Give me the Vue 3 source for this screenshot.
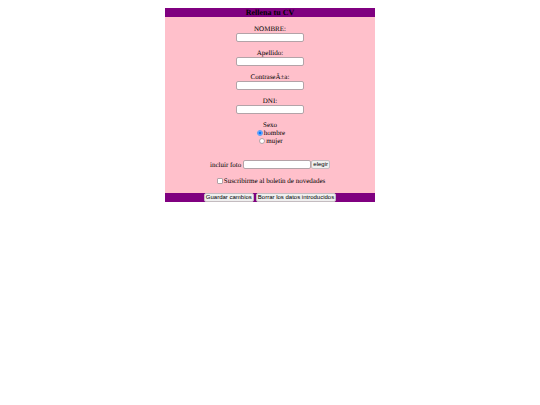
<template>
  <form class="cv" @submit.prevent>
    <header class="bar">
      <h1>Rellena tu CV</h1>
    </header>

    <div class="body">
      <!-- datos personales -->
      <div v-for="campo in campos" :key="campo.id" class="field">
        <label :for="campo.id">{{ campo.label }}</label>
        <input :id="campo.id" v-model="datos[campo.id]" class="text" :type="campo.type" />
      </div>

      <div class="sexo" role="radiogroup" aria-labelledby="sexo">
        <span id="sexo">Sexo</span>
        <label><input v-model="sexo" type="radio" name="sexo" value="hombre" />hombre</label>
        <label><input v-model="sexo" type="radio" name="sexo" value="mujer" />mujer</label>
      </div>

      <div class="foto">
        <label for="foto">incluir foto</label>
        <input id="foto" v-model="foto" class="text" type="text" />
        <button type="button">elegir</button>
      </div>

      <label class="boletin">
        <input v-model="boletin" type="checkbox" />Suscribirme al boletin de novedades
      </label>
    </div>

    <footer class="bar">
      <button type="submit">Guardar cambios</button>
      <button type="button" @click="borrar">Borrar los datos introducidos</button>
    </footer>
  </form>
</template>

<script setup>
import { reactive, ref } from 'vue';

const campos = [
  { id: 'nombre', label: 'NOMBRE:', type: 'text' },
  { id: 'apellido', label: 'Apellido:', type: 'text' },
  { id: 'clave', label: 'ContraseÃ±a:', type: 'password' },
  { id: 'dni', label: 'DNI:', type: 'text' }
];

const datos = reactive({ nombre: '', apellido: '', clave: '', dni: '' });
const sexo = ref('hombre');
const foto = ref('');
const boletin = ref(false);

function borrar() {
  campos.forEach((campo) => { datos[campo.id] = ''; });
  sexo.value = 'hombre';
  foto.value = '';
  boletin.value = false;
}
</script>

<style>
body {
  background: #fff;
}
</style>

<style scoped>
.cv {
  width: 39%;
  margin: 0 auto;
  padding-top: 8px;
  font-family: "Liberation Serif", "Times New Roman", serif;
  font-size: 7px;
  line-height: 8px;
  text-rendering: geometricPrecision;
  color: #000;
}
.bar {
  display: flex;
  justify-content: center;
  gap: 2px;
  background: purple;
}
h1 {
  margin: 0;
  font-size: 8px;
  line-height: 9px;
}
.body {
  display: flex;
  flex-direction: column;
  align-items: center;
  padding: 8px 0;
  background: pink;
}
.field {
  display: flex;
  flex-direction: column;
  align-items: center;
  margin-bottom: 7px;
}
.text {
  box-sizing: border-box;
  width: 68px;
  height: 9px;
  margin: 0;
  padding: 0 1px;
  border: 1px solid #b3a3a8;
  border-radius: 2px;
  background: #fff;
  font: 6px/7px "Liberation Sans", Arial, sans-serif;
}
.sexo {
  display: flex;
  flex-direction: column;
  align-items: center;
}
.sexo label, .boletin {
  display: flex;
  align-items: center;
  gap: 1px;
}
input[type="radio"], input[type="checkbox"] {
  appearance: none;
  box-sizing: border-box;
  width: 6px;
  height: 6px;
  margin: 0 0 0 2px;
  border: 1px solid #b3a3a8;
  border-radius: 1px;
  background: #fff;
}
input[type="radio"] {
  border-radius: 50%;
}
input[type="radio"]:checked {
  border-color: #5c9df5;
  background: radial-gradient(circle, #0075ff 1px, #8fc0ff 2px);
}
input[type="checkbox"]:checked {
  border-color: #0075ff;
  background: #0075ff;
}
.foto {
  display: flex;
  align-items: center;
  margin: 15px 0 8px;
}
.foto label {
  margin-right: 2px;
}
button {
  box-sizing: border-box;
  height: 9px;
  margin: 0;
  padding: 0 1px;
  border: 1px solid #c4bcc0;
  border-radius: 2px;
  background: #efefef;
  color: #000;
  font: 6px/7px "Liberation Sans", Arial, sans-serif;
  white-space: nowrap;
}
</style>
